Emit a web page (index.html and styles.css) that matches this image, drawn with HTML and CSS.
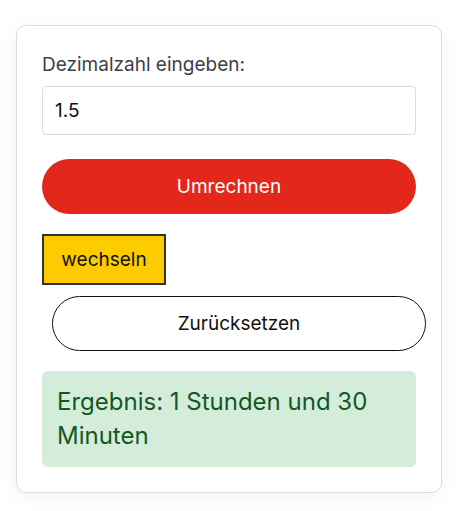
FILE: index.html
```html
<!DOCTYPE html>
<html lang="de">
<head>
  <meta charset="UTF-8" />
  <title>Dezimalzahl in Stunden</title>
  <link rel="stylesheet" href="styles.css">
</head>
<body>

  <div class="card">
    <label for="dezimal">Dezimalzahl eingeben:</label>
    <input type="text" id="dezimal" value="1.5">

    <button class="btn-convert">Umrechnen</button>
    <button class="btn-switch">wechseln</button>
    <button class="btn-reset">Zurücksetzen</button>

    <div class="result">Ergebnis: 1 Stunden und 30 Minuten</div>
  </div>

</body>
</html>
```

FILE: styles.css
```css
body {
  margin: 0;
  padding: 25px 14px 16px 16px;
  background: #fff;
  font-family: 'Inter', sans-serif;
}

.card {
  width: 426px;
  box-sizing: border-box;
  padding: 25px 25px 25px 25px;
  border: 1px solid #dcdcdc;
  border-radius: 10px;
  background: #fff;
  box-shadow: 0 4px 20px rgba(0, 0, 0, 0.05);
}

label {
  display: block;
  font-size: 19px;
  line-height: 28px;
  color: #3d3d4d;
  margin-bottom: 7px;
}

input {
  display: block;
  width: 374px;
  height: 49px;
  box-sizing: border-box;
  padding: 0 12px;
  border: 1px solid #dcdcdc;
  border-radius: 4px;
  font-family: inherit;
  font-size: 19px;
  color: #111;
  margin-bottom: 24px;
}

button {
  display: block;
  font-family: inherit;
  font-size: 19px;
  cursor: pointer;
}

.btn-convert {
  width: 374px;
  height: 55px;
  border: none;
  border-radius: 28px;
  background: #e3271b;
  color: #fff;
  margin-bottom: 20px;
}

.btn-switch {
  width: 124px;
  height: 51px;
  border: 2px solid #333;
  background: #fccc00;
  color: #111;
  margin-bottom: 11px;
}

.btn-reset {
  width: 374px;
  height: 55px;
  margin-left: 10px;
  border: 1px solid #111;
  border-radius: 28px;
  background: #fff;
  color: #111;
  margin-bottom: 20px;
}

.result {
  padding: 14px 15px;
  border-radius: 6px;
  background: #d4edda;
  color: #155724;
  font-size: 24px;
  line-height: 34px;
}
```
